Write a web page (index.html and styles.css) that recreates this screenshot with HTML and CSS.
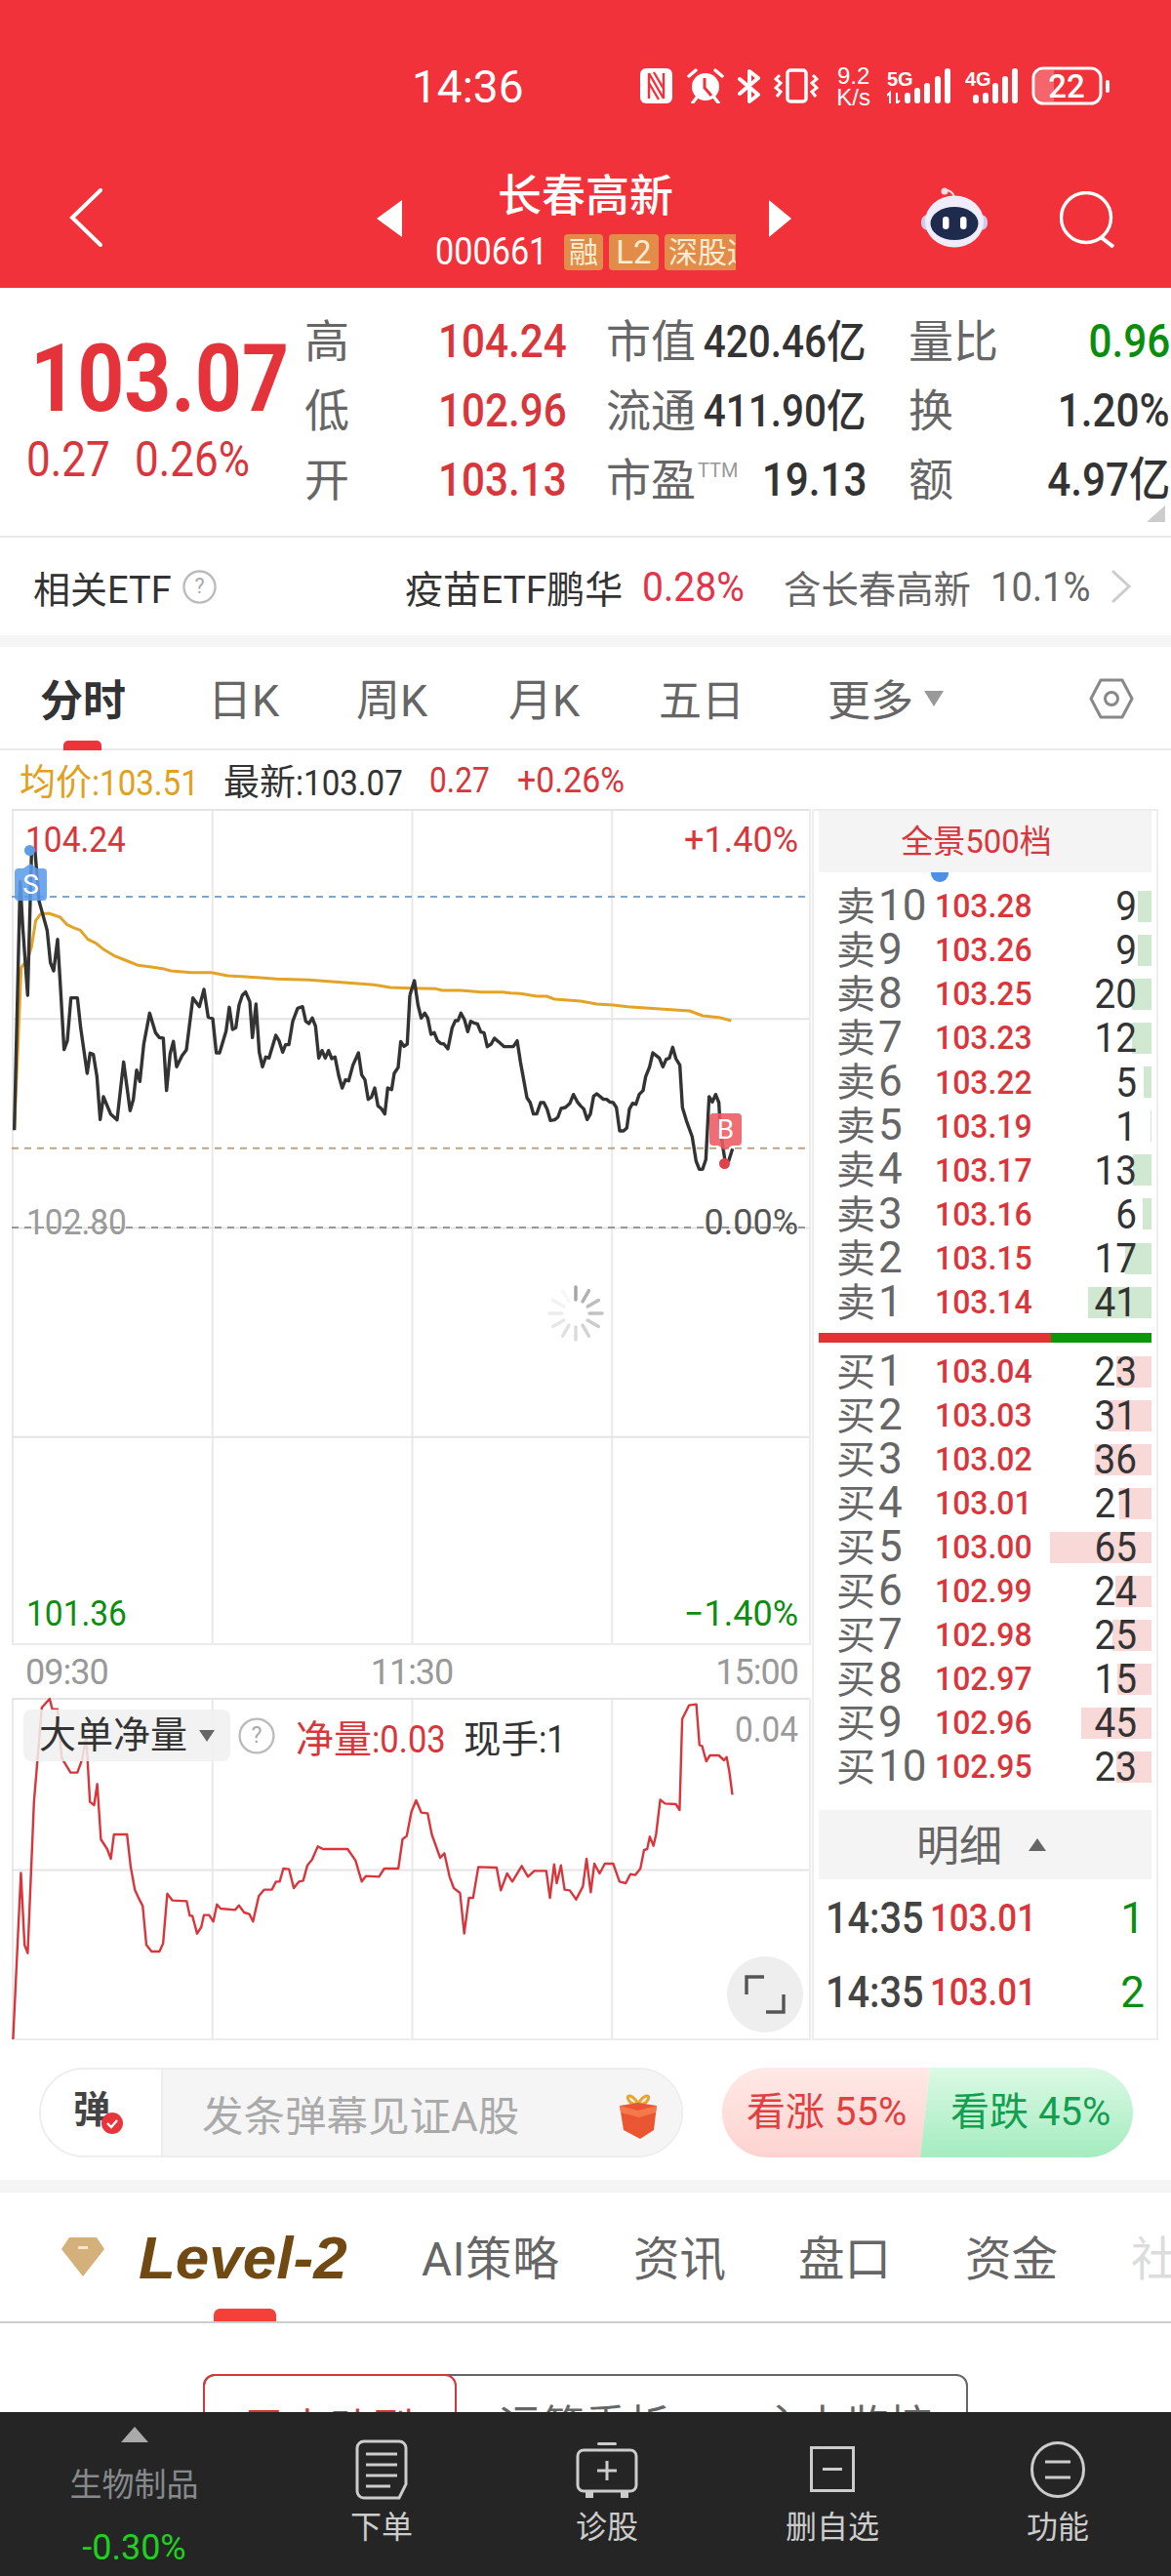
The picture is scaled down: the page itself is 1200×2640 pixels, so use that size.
FILE: index.html
```html
<!DOCTYPE html>
<html lang="zh">
<head>
<meta charset="utf-8">
<title>长春高新</title>
<link rel="stylesheet" href="styles.css">
</head>
<body>
<div class="page">
  <div class="content">
    <header class="top">
      <div class="status">
        <span class="clock">14:36</span>
        <svg class="si si-n" viewBox="0 0 33 36"><rect width="33" height="36" rx="6" fill="#fff"/><path d="M9 5V31M24 5V31M9 5L24 31M9 15L19 32M14 4L24 21" fill="none" stroke="#f1323b" stroke-width="2.4"/></svg>
        <svg class="si si-alarm" viewBox="0 0 40 36"><circle cx="20" cy="19" r="14" fill="#fff"/><path d="M3 8L10 2M37 8L30 2M7 35L11 30M33 35L29 30" stroke="#fff" stroke-width="3.4" stroke-linecap="round"/><path d="M19 10V20L26 28" fill="none" stroke="#f1323b" stroke-width="3"/></svg>
        <svg class="si si-bt" viewBox="0 0 26 36"><path d="M3 11L22 27L13 34V3L22 10L3 26" fill="none" stroke="#fff" stroke-width="4" stroke-linejoin="round" stroke-linecap="round"/></svg>
        <svg class="si si-vib" viewBox="0 0 46 36"><rect x="14" y="2" width="19" height="32" rx="3" fill="none" stroke="#fff" stroke-width="3.5"/><path d="M6 7L2 11L7 15L2 20L7 24L3 29M40 7L44 11L39 15L44 20L39 24L43 29" fill="none" stroke="#fff" stroke-width="3"/></svg>
        <div class="net"><span>9.2</span><span>K/s</span></div>
        <svg class="si si-5g" viewBox="0 0 66 36"><text x="0" y="18" class="sig-t">5G</text><path d="M3 36V25L0 28M10 25V36L13 33" fill="none" stroke="#fff" stroke-width="2"/><rect x="18" y="25" width="6" height="11" rx="3" fill="#fff"/><rect x="28" y="20" width="6" height="16" rx="3" fill="#fff"/><rect x="38" y="15" width="6" height="21" rx="3" fill="#fff"/><rect x="49" y="8" width="6" height="28" rx="3" fill="#fff"/><rect x="59" y="0" width="6" height="36" rx="3" fill="#fff"/></svg>
        <svg class="si si-4g" viewBox="0 0 54 36"><text x="0" y="18" class="sig-t">4G</text><rect x="8" y="27" width="6" height="9" rx="3" fill="#fff"/><rect x="18" y="25" width="6" height="11" rx="3" fill="#fff"/><rect x="28" y="15" width="6" height="21" rx="3" fill="#fff"/><rect x="38" y="8" width="6" height="28" rx="3" fill="#fff"/><rect x="48" y="0" width="6" height="36" rx="3" fill="#fff"/></svg>
        <svg class="si si-bat" viewBox="0 0 80 40"><rect x="2" y="2" width="69" height="36" rx="10" fill="none" stroke="#fff" stroke-width="3"/><path d="M4 12a8 8 0 0 1 8-8H23V36H12a8 8 0 0 1-8-8Z" fill="#fff" fill-opacity=".25"/><text x="36" y="32" class="bat-t">22</text><rect x="76" y="14" width="4" height="13" rx="2" fill="#fff"/></svg>
      </div>
      <nav class="nav">
        <svg class="back" viewBox="0 0 34 60"><path d="M32 2L3 30L32 58" fill="none" stroke="#fff" stroke-width="4" stroke-linecap="round"/></svg>
        <div class="tri tri-l"></div>
        <div class="title">
          <div class="name">长春高新</div>
          <div class="code-row">
            <span class="code">000661</span>
            <span class="tag tag-a">融</span>
            <span class="tag tag-b">L2</span>
            <span class="tag tag-c">深股通</span>
          </div>
        </div>
        <div class="tri tri-r"></div>
        <svg class="robot" viewBox="0 0 68 62"><path d="M34 10C33 5 28 2 24 4" fill="none" stroke="#f3dfe6" stroke-width="2"/><circle cx="24" cy="4" r="3.5" fill="#f3dfe6"/><rect x="0" y="28" width="68" height="16" rx="7" fill="#cfcaf0"/><ellipse cx="34" cy="35" rx="30" ry="26.5" fill="#efedfb"/><ellipse cx="34" cy="37" rx="24.5" ry="17" fill="#1f2b4c"/><rect x="22" y="30" width="6.5" height="13" rx="3.2" fill="#fff"/><rect x="40" y="30" width="6.5" height="13" rx="3.2" fill="#fff"/></svg>
        <svg class="search" viewBox="0 0 56 58"><circle cx="27" cy="27" r="25.5" fill="none" stroke="#fff" stroke-width="3.4"/><path d="M42 47L55 57" stroke="#fff" stroke-width="4"/></svg>
      </nav>
    </header>

    <section class="quote">
      <div class="now">
        <div class="now-px">103.07</div>
        <div class="now-ch"><span class="c1">0.27</span><span class="c2">0.26%</span></div>
      </div>
      <div class="stats">
        <div class="stat s1"><span class="k">高</span><span class="v red">104.24</span></div>
        <div class="stat s2"><span class="k">市值</span><span class="v sm">420.46亿</span></div>
        <div class="stat s3"><span class="k">量比</span><span class="v green">0.96</span></div>
        <div class="stat s1"><span class="k">低</span><span class="v red">102.96</span></div>
        <div class="stat s2"><span class="k">流通</span><span class="v sm">411.90亿</span></div>
        <div class="stat s3"><span class="k">换</span><span class="v">1.20%</span></div>
        <div class="stat s1"><span class="k">开</span><span class="v red">103.13</span></div>
        <div class="stat s2"><span class="k">市盈<sup class="ttm">TTM</sup></span><span class="v">19.13</span></div>
        <div class="stat s3"><span class="k">额</span><span class="v">4.97亿</span></div>
      </div>
      <div class="corner"></div>
    </section>

    <section class="etf">
      <span class="etf-l">相关ETF</span>
      <svg class="help" viewBox="0 0 36 36"><circle cx="18" cy="18" r="16.5" fill="none" stroke="#bbb" stroke-width="2.4"/><text x="18" y="25" class="help-t">?</text></svg>
      <span class="etf-name">疫苗ETF鹏华</span>
      <span class="etf-ch">0.28%</span>
      <span class="etf-in">含长春高新</span>
      <span class="etf-w">10.1%</span>
      <svg class="etf-go" viewBox="0 0 22 36"><path d="M2 2L19 18L2 34" fill="none" stroke="#ccc" stroke-width="3"/></svg>
    </section>
    <div class="band"></div>

    <nav class="tabs">
      <span class="tab t1 on">分时</span>
      <span class="tab t2">日K</span>
      <span class="tab t3">周K</span>
      <span class="tab t4">月K</span>
      <span class="tab t5">五日</span>
      <span class="tab t6">更多</span>
      <span class="more-tri"></span>
      <svg class="hex" viewBox="0 0 46 42"><path d="M12 2H34L44 21L34 40H12L2 21Z" fill="none" stroke="#888" stroke-width="3" stroke-linejoin="round"/><circle cx="23" cy="21" r="6.5" fill="none" stroke="#888" stroke-width="3"/></svg>
    </nav>

    <div class="legend">
      <span class="amber">均价<b class="nx">:103.51</b></span>
      <span class="dark">最新<b class="nx">:103.07</b></span>
      <span class="red"><b class="nx">0.27</b></span>
      <span class="red"><b class="nx">+0.26%</b></span>
    </div>

    <div class="market">
      <div class="charts">
        <div class="chart price">
          <svg class="plot" viewBox="36 -33 2457 2571" preserveAspectRatio="none">
            <line class="d d-blue" x1="36" y1="237" x2="2493" y2="237"/>
            <line class="d d-tan" x1="36" y1="1010" x2="2493" y2="1010"/>
            <line class="d d-gray" x1="36" y1="1254" x2="2493" y2="1254"/>
            <polyline class="l amberl" points="44,950 55,700 65,455 85,430 97,390 110,310 125,290 150,288 185,300 205,322 225,332 247,340 270,368 295,380 320,400 350,418 385,432 425,448 465,453 500,458 525,465 590,470 650,470 700,480 790,485 850,490 950,493 1050,500 1150,508 1200,516 1260,518"/>
            <polyline class="l amberl" transform="translate(1260 0)" points="0,518 80,520 100,525 155,525 220,530 285,530 310,533 340,535 390,543 420,543 445,552 525,558 575,567 625,570 670,575 780,583 860,588 900,603 950,608 988,618"/>
            <polyline class="l black" points="44,955 62,190 70,330 85,540 97,100 108,100 120,250 145,340 155,440 165,465 177,368 185,500 197,707 207,680 218,548 238,548 248,640 268,780 277,718 287,722 298,790 308,922 318,852 340,905 360,923 380,745 400,895 410,860 420,770 430,805 442,690 460,595 478,655 490,670 502,672 512,833 523,720 533,682 543,760 560,725 573,708 593,548 613,575 627,522 640,607 654,612 665,717 675,717 695,650 705,577 715,645 725,640 735,570 745,540 755,530 768,560 776,670 787,567 797,715 807,760 817,730 827,733 848,663 858,680 869,715 878,692 888,692 900,620 915,580 930,575 940,620 950,627 960,610 970,635 980,733 990,710 1000,733 1010,710 1020,735 1030,730 1042,790 1052,825 1062,800 1072,803 1085,755 1102,717 1112,785 1122,800 1132,860 1142,853 1152,825 1162,880 1172,888 1183,905 1192,825 1204,830 1212,780 1224,762 1232,682 1242,697 1252,690 1260,540"/>
            <polyline class="l black" transform="translate(1260 0)" points="0,540 14,495 25,570 35,610 46,595 55,610 65,660 75,655 85,680 95,688 105,690 117,705 130,640 140,618 148,618 157,595 168,615 178,652 187,620 197,625 208,628 218,653 228,655 238,698 250,690 260,672 275,685 290,698 318,698 330,680 340,745 350,800 360,855 370,870 380,905 390,905 402,870 412,870 422,890 432,925 445,923 455,915 465,888 478,885 492,872 503,845 515,868 525,880 535,890 545,922 555,905 565,850 575,843 595,860 605,860 615,868 625,870 635,885 645,957 657,957 667,948 675,890 685,872 695,875 705,845 717,833 725,790 737,760 747,717 767,733 778,760 788,737 798,733 808,700 818,735 830,755 838,885 850,925 868,975 880,1050 890,1075 900,1075 910,1045 920,852 930,868 940,845 950,870 955,960 970,1055 980,1050 992,1012"/>
          </svg>
          <span class="lb lb-hi lsx red">104.24</span>
          <span class="lb lb-hip red">+1.40%</span>
          <span class="lb lb-mid lsx gray">102.80</span>
          <span class="lb lb-midp dim">0.00%</span>
          <span class="lb lb-lo lsx green">101.36</span>
          <span class="lb lb-lop green">−1.40%</span>
          <span class="dot dot-s"></span>
          <span class="flag flag-s">S</span>
          <span class="flag flag-b">B</span>
          <span class="dot dot-b"></span>
          <svg class="spin" viewBox="-30 -30 60 60">
            <g stroke="#888" stroke-width="3.4" stroke-linecap="round">
              <line x1="0" y1="-14" x2="0" y2="-27" opacity=".75"/>
              <line x1="0" y1="-14" x2="0" y2="-27" opacity=".65" transform="rotate(30)"/>
              <line x1="0" y1="-14" x2="0" y2="-27" opacity=".55" transform="rotate(60)"/>
              <line x1="0" y1="-14" x2="0" y2="-27" opacity=".5" transform="rotate(90)"/>
              <line x1="0" y1="-14" x2="0" y2="-27" opacity=".42" transform="rotate(120)"/>
              <line x1="0" y1="-14" x2="0" y2="-27" opacity=".36" transform="rotate(150)"/>
              <line x1="0" y1="-14" x2="0" y2="-27" opacity=".3" transform="rotate(180)"/>
              <line x1="0" y1="-14" x2="0" y2="-27" opacity=".25" transform="rotate(210)"/>
              <line x1="0" y1="-14" x2="0" y2="-27" opacity=".2" transform="rotate(240)"/>
              <line x1="0" y1="-14" x2="0" y2="-27" opacity=".15" transform="rotate(270)"/>
              <line x1="0" y1="-14" x2="0" y2="-27" opacity=".1" transform="rotate(300)"/>
              <line x1="0" y1="-14" x2="0" y2="-27" opacity=".06" transform="rotate(330)"/>
            </g>
          </svg>
        </div>
        <div class="axis"><span>09:30</span><span>11:30</span><span>15:00</span></div>
        <div class="chart sub">
          <svg class="plot" viewBox="22.4 180 1528.8 1053" preserveAspectRatio="none">
            <polyline class="l redl" points="25,1230 40,718 47,940 53,965 65,500 80,210 95,183 100,215 110,215 118,365 135,410 148,410 157,370 165,300 172,500 180,510 186,445 193,615 205,645 212,675 218,600 243,600 250,700 258,770 265,795 273,820 280,940 290,960 305,960 312,935 320,782 330,803 357,805 363,850 368,850 377,905 385,885 390,848 400,848 408,868 415,815 422,828 450,832 457,818 467,840 477,845 484,868 495,790 505,770 520,770 528,745 535,745 542,705 553,707 562,765 572,745 580,742 588,695 597,677 608,637 618,645 665,645 680,680 692,745 700,728 725,730 735,705 762,705 770,615 778,605 787,530 796,495 806,533 818,535 826,600 842,672 850,658 860,730 868,765 880,780 888,905 897,795 905,795 915,700 950,702 958,772 970,720 980,745 998,697 1010,730 1022,712 1045,712 1052,795 1060,692 1065,750 1073,695 1080,770 1090,772 1102,800 1115,760 1122,675 1130,778 1137,690 1147,720 1157,690 1173,690 1185,745 1197,750 1206,722 1215,725 1225,705 1232,648 1238,645 1243,607 1250,635 1255,600 1263,493 1272,505 1293,507 1300,525 1305,245 1318,203 1332,200 1338,325 1343,328 1351,375 1358,357 1375,357 1385,372 1390,362 1395,405 1401,478"/>
          </svg>
          <div class="sub-head">
            <span class="chip">大单净量<i class="chip-tri"></i></span>
            <svg class="help help-sub" viewBox="0 0 36 36"><circle cx="18" cy="18" r="16.5" fill="none" stroke="#bbb" stroke-width="2.2"/><text x="18" y="25" class="help-t">?</text></svg>
            <span class="sub-net red">净量<b class="nx">:0.03</b></span>
            <span class="sub-hand">现手<b class="nx">:1</b></span>
          </div>
          <span class="lb lb-sub rsx gray">0.04</span>
          <button class="full"><svg viewBox="0 0 42 40"><path d="M2 20V2H20M40 20V38H22" fill="none" stroke="#555" stroke-width="3.4"/></svg></button>
        </div>
      </div>

      <aside class="book">
        <div class="book-head">全景500档<i class="book-dot"></i></div>
        <div class="rows sell">
          <div class="row"><i class="bar" style="width:14px"></i><span class="lab">卖<b>10</b></span><span class="px">103.28</span><span class="qty">9</span></div>
          <div class="row"><i class="bar" style="width:14px"></i><span class="lab">卖<b>9</b></span><span class="px">103.26</span><span class="qty">9</span></div>
          <div class="row"><i class="bar" style="width:20px"></i><span class="lab">卖<b>8</b></span><span class="px">103.25</span><span class="qty">20</span></div>
          <div class="row"><i class="bar" style="width:20px"></i><span class="lab">卖<b>7</b></span><span class="px">103.23</span><span class="qty">12</span></div>
          <div class="row"><i class="bar" style="width:8px"></i><span class="lab">卖<b>6</b></span><span class="px">103.22</span><span class="qty">5</span></div>
          <div class="row"><i class="bar" style="width:1px"></i><span class="lab">卖<b>5</b></span><span class="px">103.19</span><span class="qty">1</span></div>
          <div class="row"><i class="bar" style="width:19px"></i><span class="lab">卖<b>4</b></span><span class="px">103.17</span><span class="qty">13</span></div>
          <div class="row"><i class="bar" style="width:9px"></i><span class="lab">卖<b>3</b></span><span class="px">103.16</span><span class="qty">6</span></div>
          <div class="row"><i class="bar" style="width:27px"></i><span class="lab">卖<b>2</b></span><span class="px">103.15</span><span class="qty">17</span></div>
          <div class="row"><i class="bar" style="width:65px"></i><span class="lab">卖<b>1</b></span><span class="px">103.14</span><span class="qty">41</span></div>
        </div>
        <div class="split"><i class="split-r"></i><i class="split-g"></i></div>
        <div class="rows buy">
          <div class="row"><i class="bar" style="width:36px"></i><span class="lab">买<b>1</b></span><span class="px">103.04</span><span class="qty">23</span></div>
          <div class="row"><i class="bar" style="width:45px"></i><span class="lab">买<b>2</b></span><span class="px">103.03</span><span class="qty">31</span></div>
          <div class="row"><i class="bar" style="width:58px"></i><span class="lab">买<b>3</b></span><span class="px">103.02</span><span class="qty">36</span></div>
          <div class="row"><i class="bar" style="width:33px"></i><span class="lab">买<b>4</b></span><span class="px">103.01</span><span class="qty">21</span></div>
          <div class="row"><i class="bar" style="width:104px"></i><span class="lab">买<b>5</b></span><span class="px">103.00</span><span class="qty">65</span></div>
          <div class="row"><i class="bar" style="width:37px"></i><span class="lab">买<b>6</b></span><span class="px">102.99</span><span class="qty">24</span></div>
          <div class="row"><i class="bar" style="width:40px"></i><span class="lab">买<b>7</b></span><span class="px">102.98</span><span class="qty">25</span></div>
          <div class="row"><i class="bar" style="width:35px"></i><span class="lab">买<b>8</b></span><span class="px">102.97</span><span class="qty">15</span></div>
          <div class="row"><i class="bar" style="width:72px"></i><span class="lab">买<b>9</b></span><span class="px">102.96</span><span class="qty">45</span></div>
          <div class="row"><i class="bar" style="width:36px"></i><span class="lab">买<b>10</b></span><span class="px">102.95</span><span class="qty">23</span></div>
        </div>
        <div class="detail-head"><span class="detail-t">明细</span><i class="detail-tri"></i></div>
        <div class="trade"><span class="tt">14:35</span><span class="tp">103.01</span><span class="tq">1</span></div>
        <div class="trade"><span class="tt">14:35</span><span class="tp">103.01</span><span class="tq">2</span></div>
      </aside>
    </div>

    <div class="social">
      <div class="danmu">
        <div class="dm-icon"><span class="dm-zi">弹</span><i class="dm-check"><svg viewBox="0 0 22 22"><circle cx="11" cy="11" r="11" fill="#e8353b"/><path d="M6 11L10 15L16 8" fill="none" stroke="#fff" stroke-width="2.4"/></svg></i></div>
        <div class="dm-input">
          <span>发条弹幕见证A股</span>
          <svg class="gift" viewBox="0 0 46 48"><path d="M23 11C17 1 10 1 13 7C15 11 20 12 23 11C26 12 31 11 33 7C36 1 29 1 23 11Z" fill="none" stroke="#eaa52e" stroke-width="3"/><path d="M4 13L23 10L42 13L39 38L25 47L8 38Z" fill="#ea5632"/><path d="M4 13L23 18L42 13L41 20L24 25L5 20Z" fill="#f4784a"/></svg>
        </div>
      </div>
      <div class="vote">
        <span class="up">看涨 55%</span>
        <span class="down">看跌 45%</span>
      </div>
    </div>
    <div class="band band2"></div>

    <nav class="news">
      <svg class="gem" viewBox="0 0 44 40"><path d="M8 0H36L44 12L22 40L0 12Z" fill="#d4b07a"/><rect x="17" y="9" width="10" height="3" fill="#f4e6cc"/></svg>
      <span class="lv2">Level-2</span>
      <span class="nt n1">AI策略</span>
      <span class="nt n2">资讯</span>
      <span class="nt n3">盘口</span>
      <span class="nt n4">资金</span>
      <span class="nt n5">社区</span>
    </nav>

    <div class="seg">
      <span class="seg-a">灵声助型</span>
      <span class="seg-b">运筹重析</span>
      <span class="seg-c">主力监控</span>
    </div>
  </div>

  <footer class="foot">
    <div class="sector">
      <i class="sec-tri"></i>
      <span class="sec-n">生物制品</span>
      <span class="sec-c">-0.30%</span>
    </div>
    <div class="act a1">
      <svg class="ic ic1" viewBox="0 0 54 62"><path d="M9 2H45A7 7 0 0 1 52 9V46L45 60H9A7 7 0 0 1 2 53V9A7 7 0 0 1 9 2Z" fill="none" stroke="#ccc" stroke-width="3"/><path d="M11 15H43M11 26H43M11 37H43M11 48H36" stroke="#ccc" stroke-width="3"/></svg>
      <span>下单</span>
    </div>
    <div class="act a2">
      <svg class="ic ic2" viewBox="0 0 64 58"><rect x="22" y="0" width="20" height="3" rx="1.5" fill="#ccc"/><rect x="2" y="8" width="60" height="42" rx="6" fill="none" stroke="#ccc" stroke-width="3"/><path d="M32 19V39M22 29H42" stroke="#ccc" stroke-width="3"/><path d="M10 51H18V57H10ZM46 51H54V57H46Z" fill="#ccc"/></svg>
      <span>诊股</span>
    </div>
    <div class="act a3">
      <svg class="ic ic3" viewBox="0 0 46 47"><rect x="1.5" y="1.5" width="43" height="44" fill="none" stroke="#ccc" stroke-width="3"/><path d="M13 23.5H33" stroke="#ccc" stroke-width="3"/></svg>
      <span>删自选</span>
    </div>
    <div class="act a4">
      <svg class="ic ic4" viewBox="0 0 56 58"><ellipse cx="28" cy="29" rx="26.5" ry="27.5" fill="none" stroke="#ccc" stroke-width="3"/><path d="M15 21H41M15 37H41" stroke="#ccc" stroke-width="3"/></svg>
      <span>功能</span>
    </div>
  </footer>
</div>
</body>
</html>
```

FILE: styles.css
```css
* { box-sizing: border-box; }
html, body { margin: 0; padding: 0; background: #fff; }
body { font-family: Roboto, "Noto Sans CJK SC", sans-serif; color: #333; }
i { display: block; font-style: normal; }
.page { width: 1200px; height: 2640px; display: flex; flex-direction: column; overflow: hidden; }
.content { height: 2472px; overflow: hidden; flex: none; }

.red { color: #d9363c; }
.green { color: #0b8e0f; }
.gray { color: #9b9b9b; }
.dim { color: #555; }
.amber { color: #e0a020; }
.dark { color: #333; }

/* narrowed numerals that follow a CJK label */
.nx { display: inline-block; font-weight: 400; transform: scaleX(.89); transform-origin: left center; }

/* header */
.top { height: 295px; background: #f1323b; color: #fff; display: flex; flex-direction: column; }
.status { height: 175px; display: flex; align-items: flex-start; padding-top: 70px; padding-left: 422px; }
.clock { font-size: 46px; line-height: 38px; flex: none; margin-right: 119px; }
.si { display: block; flex: none; height: 36px; }
.si-n { width: 33px; }
.si-alarm { width: 40px; margin-left: 14px; }
.si-bt { width: 26px; margin-left: 12px; }
.si-vib { width: 46px; margin-left: 12px; }
.net { width: 38px; margin-left: 17px; margin-top: -3px; display: flex; flex-direction: column; font-size: 24px; line-height: 22px; text-align: center; font-family: "Liberation Sans", sans-serif; white-space: nowrap; }
.si-5g { width: 66px; margin-left: 15px; }
.si-4g { width: 54px; margin-left: 14px; }
.si-bat { width: 80px; height: 40px; margin-left: 14px; margin-top: -2px; }
.sig-t { font: 700 20px "Liberation Sans", sans-serif; fill: #fff; }
.bat-t { font: 500 33px Roboto, sans-serif; fill: #fff; text-anchor: middle; }
.nav { height: 120px; position: relative; display: flex; align-items: flex-start; }
.back { width: 34px; height: 60px; margin-left: 71px; margin-top: 18px; flex: none; }
.tri { width: 0; height: 0; border-style: solid; flex: none; margin-top: 30px; }
.tri-l { border-width: 19px 26px 19px 0; border-color: transparent #fff transparent transparent; margin-left: 281px; }
.tri-r { border-width: 19px 0 19px 23px; border-color: transparent transparent transparent #fff; }
.title { width: 376px; display: flex; flex-direction: column; align-items: center; }
.name { font-size: 45px; line-height: 60px; font-weight: 500; margin-top: -3px; }
.code-row { display: flex; align-items: center; width: 308px; margin-top: 7px; height: 38px; overflow: hidden; }
.code { font-size: 38px; line-height: 38px; width: 132px; flex: none; transform: scaleX(.9); transform-origin: left center; }
.tag { background: #e38c4a; color: #fbecd2; font-size: 30px; line-height: 37px; height: 37px; flex: none; border-radius: 4px; text-align: center; white-space: nowrap; }
.tag-a { width: 40px; }
.tag-b { width: 51px; margin-left: 6px; font-size: 33px; }
.tag-c { width: 100px; margin-left: 6px; padding-left: 4px; text-align: left; }
.robot { position: absolute; left: 944px; top: 17px; width: 68px; height: 62px; }
.search { position: absolute; left: 1086px; top: 21px; width: 56px; height: 58px; }

/* quote */
.quote { height: 256px; position: relative; display: flex; border-bottom: 2px solid #e9e9e9; }
.now { width: 312px; flex: none; padding-left: 31px; }
.now-px { font-size: 97px; font-weight: 700; line-height: 80px; color: #e4333a; margin-top: 53px; transform: scaleX(.865); transform-origin: left center; white-space: nowrap; }
.now-ch { display: flex; margin-top: 21px; margin-left: -4px; font-size: 50px; line-height: 44px; color: #d9363c; white-space: nowrap; }
.now-ch span { display: block; transform: scaleX(.88); transform-origin: left center; }
.c1 { width: 111px; }
.stats { display: grid; grid-template-columns: 309px 310px 269px; grid-auto-rows: 71px; padding-top: 19px; }
.stat { display: flex; justify-content: space-between; align-items: center; white-space: nowrap; }
.s1 { padding-right: 40px; }
.s2 { padding-right: 43px; }
.s3 { padding-right: 1px; }
.k { font-size: 46px; line-height: 60px; color: #666; position: relative; }
.v { font-size: 48px; line-height: 60px; font-weight: 500; color: #333; transform: scaleX(.88); transform-origin: right center; }
.v.sm { font-size: 46px; margin-left: -30px; }
.v.red { color: #d9363c; }
.v.green { color: #0b8e0f; }
.ttm { font: 400 20px/20px Roboto, sans-serif; color: #999; vertical-align: 19px; margin-left: 2px; }
.corner { position: absolute; right: 6px; bottom: 14px; width: 0; height: 0; border-style: solid; border-width: 0 0 17px 19px; border-color: transparent transparent #ccc transparent; }

/* etf */
.etf { height: 100px; display: flex; align-items: center; font-size: 38px; white-space: nowrap; position: relative; }
.etf-l { margin-left: 34px; width: 153px; color: #333; }
.help { width: 35px; height: 35px; flex: none; display: block; }
.help-t { font: 400 22px Roboto, sans-serif; fill: #aaa; text-anchor: middle; }
.etf-name { margin-left: 193px; width: 243px; color: #333; font-size: 39px; }
.etf-ch { width: 145px; color: #e0354a; font-size: 42px; transform: scaleX(.93); transform-origin: left center; }
.etf-in { width: 212px; color: #666; font-size: 38.4px; }
.etf-w { width: 123px; color: #666; font-size: 42px; transform: scaleX(.91); transform-origin: left center; }
.etf-go { width: 22px; height: 36px; flex: none; }
.band { height: 12px; background: #f5f5f5; }

/* tabs */
.tabs { height: 106px; border-bottom: 2px solid #e9e9e9; display: flex; position: relative; }
.tab { position: absolute; top: 26px; font-size: 44px; line-height: 60px; color: #666; }
.t1 { left: 41px; font-weight: 700; color: #333; }
.t1::after { content: ""; position: absolute; left: 24px; top: 70px; width: 39px; height: 10px; border-radius: 5px 5px 0 0; background: #ee343b; }
.t2, .t3, .t4 { font-size: 45px; }
.t2 { left: 213px; }
.t3 { left: 365px; }
.t4 { left: 521px; }
.t5 { left: 675px; }
.t6 { left: 848px; }
.more-tri { position: absolute; left: 947px; top: 45px; width: 0; height: 0; border-style: solid; border-width: 16px 10.5px 0 10.5px; border-color: #999 transparent transparent transparent; }
.hex { position: absolute; left: 1116px; top: 32px; width: 46px; height: 42px; }

/* legend */
.legend { height: 60px; display: flex; align-items: center; padding-left: 20px; font-size: 37px; white-space: nowrap; }
.legend .nx { font-size: 36px; transform: scaleX(.92); }
.legend span:nth-child(1) { width: 209px; }
.legend span:nth-child(2) { width: 211px; }
.legend span:nth-child(3) { width: 90px; }
.legend span:nth-child(3) .nx { transform: scaleX(.88); }
.legend span:nth-child(4) .nx { transform: scaleX(.94); }

/* market */
.market { height: 1262px; display: flex; }
.charts { width: 819px; margin-left: 12px; flex: none; }
.chart { position: relative; width: 819px; background-image: linear-gradient(#e4e4e4 2px, transparent 2px), linear-gradient(90deg, #e9e9e9 2px, transparent 2px); box-shadow: inset -2px -2px 0 #ececec; }
.price { height: 857px; background-size: 25% 25%; }
.sub { height: 351px; background-size: 25% 50%; }
.plot { position: absolute; left: 0; top: 0; width: 819px; height: 100%; display: block; overflow: visible; }
.l { fill: none; stroke-linejoin: round; vector-effect: non-scaling-stroke; }
.black { stroke: #333; stroke-width: 3.4px; }
.amberl { stroke: #e3a327; stroke-width: 3px; }
.redl { stroke: #d9363c; stroke-width: 2.4px; }
.d { vector-effect: non-scaling-stroke; stroke-width: 2px; stroke-dasharray: 7 6; }
.d-blue { stroke: #7ba7d2; }
.d-tan { stroke: #bba681; }
.d-gray { stroke: #999; }
.lb { position: absolute; font-size: 36px; line-height: 38px; font-weight: 400; white-space: nowrap; }
.lsx { transform: scaleX(.93); transform-origin: left center; }
.rsx { transform: scaleX(.93); transform-origin: right center; }
.lb-hi { left: 14px; top: 13px; }
.lb-hip { right: 13px; top: 13px; }
.lb-mid { left: 15px; top: 405px; }
.lb-midp { right: 13px; top: 405px; }
.lb-lo { left: 15px; top: 806px; }
.lb-lop { right: 13px; top: 806px; }
.lb-sub { right: 13px; top: 14px; }
.dot { position: absolute; width: 11px; height: 11px; border-radius: 50%; }
.dot-s { left: 13px; top: 37px; background: #5f9de2; }
.dot-b { left: 725px; top: 358px; background: #e2404a; }
.flag { position: absolute; width: 33px; height: 33px; border-radius: 4px; color: #fff; font-size: 28px; line-height: 33px; text-align: center; }
.flag-s { left: 3px; top: 61px; background: rgba(92, 156, 234, .88); }
.flag-s::before { content: ""; position: absolute; left: 9px; top: -5px; border-style: solid; border-width: 0 7.5px 5px 7.5px; border-color: transparent transparent rgba(92, 156, 234, .88) transparent; }
.flag-b { left: 715px; top: 312px; background: rgba(236, 90, 97, .88); }
.flag-b::after { content: ""; position: absolute; left: 9px; bottom: -5px; border-style: solid; border-width: 5px 7.5px 0 7.5px; border-color: rgba(236, 90, 97, .88) transparent transparent transparent; }
.spin { position: absolute; left: 548px; top: 487px; width: 60px; height: 60px; }
.axis { height: 54px; display: flex; justify-content: space-between; align-items: center; padding: 1px 13px 0 14px; font-size: 36px; letter-spacing: -1px; color: #999; }
.sub-head { position: absolute; left: 12px; top: 12px; display: flex; align-items: center; white-space: nowrap; height: 53px; }
.chip { width: 212px; height: 53px; background: rgba(240, 240, 240, .85); border-radius: 8px; font-size: 38px; line-height: 53px; color: #333; padding-left: 16px; position: relative; }
.chip-tri { position: absolute; left: 180px; top: 21px; width: 0; height: 0; border-style: solid; border-width: 12px 8.5px 0 8.5px; border-color: #666 transparent transparent transparent; }
.help-sub { width: 38px; height: 38px; margin-left: 8px; }
.sub-net { font-size: 39px; margin-left: 21px; width: 172px; flex: none; }
.sub-hand { font-size: 38.5px; color: #333; }
.sub-head .nx { font-size: 38px; transform: scaleX(.91); }
.full { position: absolute; left: 733px; top: 265px; width: 78px; height: 78px; border: 0; padding: 0; border-radius: 50%; background: #eee; display: flex; align-items: center; justify-content: center; }
.full svg { width: 42px; height: 40px; display: block; }

/* order book */
.book { width: 355px; margin-left: 1px; flex: none; border: 2px solid #eee; padding: 0 5px; height: 1262px; }
.book-head { height: 63px; background: #f4f4f4; color: #d9363c; font-size: 33px; line-height: 63px; text-align: center; padding-right: 18px; position: relative; }
.book-dot { position: absolute; left: 115px; bottom: -10px; width: 18px; height: 10px; border-radius: 0 0 9px 9px; background: #4a90e8; }
.rows { display: flex; flex-direction: column; }
.sell { padding-top: 12px; }
.buy { padding-top: 7.5px; }
.row { position: relative; display: flex; align-items: center; white-space: nowrap; padding-left: 18px; padding-right: 15px; }
.sell .row { height: 45.15px; }
.buy .row { height: 45px; }
.bar { position: absolute; right: 0; top: 6.5px; height: 32px; }
.sell .bar { background: #cfe8cf; }
.buy .bar { background: #f9d8d8; }
.lab { width: 101px; color: #666; font-size: 40px; line-height: 45px; position: relative; flex: none; }
.lab b { font-size: 44px; font-weight: 400; margin-left: 3px; }
.px { color: #d9363c; font-size: 34px; line-height: 45px; font-weight: 500; position: relative; flex: none; transform: scaleX(.94); transform-origin: left center; }
.qty { color: #333; font-size: 43px; line-height: 45px; position: relative; flex: 1; text-align: right; transform: scaleX(.9); transform-origin: right center; }
.split { display: flex; height: 10px; margin-top: 8.5px; }
.split-r { width: 238px; background: #e23232; }
.split-g { flex: 1; background: #0a980a; }
.detail-head { height: 71px; margin-top: 21.5px; background: #f4f4f4; color: #666; font-size: 44px; line-height: 71px; display: flex; align-items: center; padding-left: 100px; }
.detail-t { position: relative; top: 3px; }
.detail-tri { margin-left: 27px; width: 0; height: 0; border-style: solid; border-width: 0 9.5px 13px 9.5px; border-color: transparent transparent #666 transparent; }
.trade { height: 76px; display: flex; align-items: center; padding-left: 7px; padding-right: 7px; white-space: nowrap; position: relative; top: 2px; }
.tt { width: 107px; font-size: 44px; color: #444; font-weight: 500; flex: none; transform: scaleX(.9); transform-origin: left center; }
.tp { color: #d9363c; font-size: 38px; font-weight: 500; flex: 1; transform: scaleX(.92); transform-origin: left center; }
.tq { color: #0b8e0f; font-size: 44px; }

/* social */
.social { height: 143px; display: flex; padding-top: 28px; }
.danmu { width: 660px; height: 92px; margin-left: 40px; border-radius: 46px; border: 2px solid #eee; display: flex; overflow: hidden; flex: none; }
.dm-icon { width: 125px; flex: none; position: relative; background: #fff; border-right: 2px solid #eee; }
.dm-zi { position: absolute; left: 33px; top: 16px; font-size: 38px; line-height: 50px; font-weight: 700; color: #444; }
.dm-check { position: absolute; left: 62px; top: 44px; width: 22px; height: 22px; }
.dm-check svg { display: block; width: 22px; height: 22px; }
.dm-input { flex: 1; background: #f5f5f5; display: flex; align-items: center; justify-content: space-between; padding-left: 40px; padding-right: 21px; font-size: 42.5px; color: #aaa; white-space: nowrap; }
.gift { width: 46px; height: 48px; flex: none; display: block; margin-top: 8px; }
.vote { width: 421px; height: 92px; margin-left: 40px; display: flex; flex: none; position: relative; font-size: 40px; white-space: nowrap; }
.up { width: 213px; height: 92px; border-radius: 46px 0 0 46px; background: linear-gradient(#ffe9e6, #fdd3d0); color: #e04040; line-height: 92px; padding-left: 25px; clip-path: polygon(0 0, 100% 0, 95.4% 100%, 0 100%); }
.down { position: absolute; left: 203px; width: 218px; height: 92px; border-radius: 0 46px 46px 0; background: linear-gradient(#dcf9e5, #a4ecbf); color: #12a050; line-height: 92px; padding-left: 31px; clip-path: polygon(4.6% 0, 100% 0, 100% 100%, 0 100%); }
.band2 { height: 13px; }

/* news tabs */
.news { height: 134px; border-bottom: 2px solid #ccc; position: relative; white-space: nowrap; overflow: hidden; }
.gem { position: absolute; left: 63px; top: 46px; width: 44px; height: 40px; }
.lv2 { position: absolute; left: 142px; top: 32px; font: italic 700 62px/70px "Liberation Sans", sans-serif; color: #704a12; }
.lv2::after { content: ""; position: absolute; left: 77px; top: 87px; width: 64px; height: 13px; border-radius: 6.5px 6.5px 0 0; background: #f5403a; }
.nt { position: absolute; top: 38px; font-size: 47.5px; line-height: 62px; color: #666; }
.n1 { left: 432px; letter-spacing: .6px; }
.n2 { left: 649px; }
.n3 { left: 818px; }
.n4 { left: 989px; }
.n5 { left: 1159px; opacity: .22; }

/* segmented */
.seg { margin: 52px 0 0 208px; width: 784px; height: 60px; border: 2px solid #666; border-radius: 12px 12px 0 0; display: flex; font-size: 44px; line-height: 60px; color: #666; white-space: nowrap; position: relative; padding-top: 24px; }
.seg-a { width: 260px; margin-left: -2px; margin-top: -26px; padding-top: 26px; padding-left: 39px; color: #d9363c; border: 2px solid #d9363c; border-radius: 12px 12px 0 0; height: 100px; }
.seg-b { margin-left: 43px; margin-top: -2px; }
.seg-c { margin-left: 92px; margin-top: -2px; }

/* footer */
.foot { height: 168px; flex: none; background: #252525; position: relative; color: #ccc; }
.sector { position: absolute; left: 0; top: 0; width: 275px; display: flex; flex-direction: column; align-items: center; }
.sec-tri { margin-top: 15px; width: 0; height: 0; border-style: solid; border-width: 0 14.5px 16px 14.5px; border-color: transparent transparent #aaa transparent; }
.sec-n { margin-top: 22px; font-size: 33px; line-height: 44px; color: #858a8c; }
.sec-c { margin-top: 22px; font-size: 36px; line-height: 40px; color: #1fd01f; }
.act { position: absolute; top: 0; display: flex; flex-direction: column; align-items: center; font-size: 32px; line-height: 44px; white-space: nowrap; }
.act span { position: absolute; top: 96px; }
.ic { display: block; position: absolute; }
.a1 { left: 391px; }
.a2 { left: 622px; }
.a3 { left: 853px; }
.a4 { left: 1084px; }
.ic1 { top: 28px; width: 54px; height: 62px; left: -27px; }
.ic2 { top: 31px; width: 64px; height: 58px; left: -32px; }
.ic3 { top: 35px; width: 46px; height: 47px; left: -23px; }
.ic4 { top: 30px; width: 56px; height: 58px; left: -28px; }
```
